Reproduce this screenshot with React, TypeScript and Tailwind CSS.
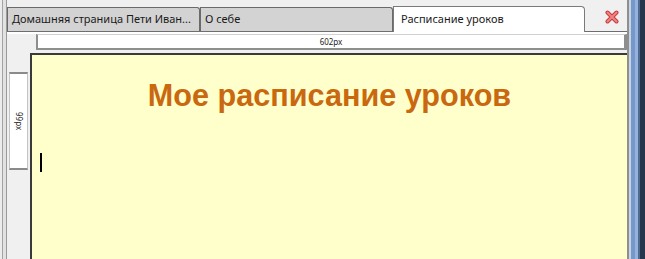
import { Fragment } from 'react';

const tabs = [
  { label: 'Домашняя страница Пети Иван...', active: false },
  { label: 'О себе', active: false },
  { label: 'Расписание уроков', active: true },
];

const CloseIcon = () => (
  <svg width="14" height="14" viewBox="0 0 14 14">
    <path d="M2.5 2.5 L11.5 11.5 M11.5 2.5 L2.5 11.5" stroke="#c83a3a" strokeWidth="4" strokeLinecap="round" />
    <path d="M2.5 2.5 L11.5 11.5 M11.5 2.5 L2.5 11.5" stroke="#ee8484" strokeWidth="2" strokeLinecap="round" />
  </svg>
);

export default function App() {
  return (
    <div className="w-[645px] h-[259px] flex overflow-hidden bg-[#f0f0f0] font-['Noto_Sans','Liberation_Sans',sans-serif]">
      {/* left window edge */}
      <div className="flex w-[7px] shrink-0">
        <div className="w-[2px] bg-[#ececec]" />
        <div className="w-px bg-[#a4a4a4]" />
        <div className="w-[3px] bg-[#e2e2e2]" />
        <div className="w-px bg-[#9a9a9a]" />
      </div>

      <div className="flex flex-col w-[620px] shrink-0">
        {/* tabs */}
        <div className="flex h-[32px] items-end border-b border-[#6e6e6e]">
          {tabs.map((t) => (
            <Fragment key={t.label}>
              {t.active ? (
                <div className="w-[192px] h-[26px] -mb-px bg-white border border-b-0 border-[#7a7a7a] rounded-tr-[4px] px-[7px] flex items-center text-[11px] text-[#1a1a1a]">
                  {t.label}
                </div>
              ) : (
                <div className="w-[193px] h-[24px] bg-[#d3d3d3] border border-b-0 border-[#6a6a6a] rounded-tr-[3px] px-[4px] flex items-center text-[11px] text-[#1a1a1a] whitespace-nowrap overflow-hidden">
                  {t.label}
                </div>
              )}
            </Fragment>
          ))}
          <div className="flex-1 h-full flex items-center justify-end pr-[8px] pt-[2px]">
            <CloseIcon />
          </div>
        </div>
        <div className="h-[2px] bg-white" />

        {/* horizontal ruler */}
        <div className="flex h-[16px]">
          <div className="w-[29px]" />
          <div className="flex-1 bg-white border-l-2 border-r-[3px] border-b-2 border-t border-[#8e8e8e] border-t-[#d0d0d0] flex items-center justify-center text-[8px] leading-none text-[#222]">
            602px
          </div>
        </div>
        <div className="h-[3px]" />

        {/* page area */}
        <div className="flex flex-1">
          <div className="w-[23px] pt-[19px] pl-[2px]">
            <div className="w-[19px] h-[98px] bg-white border-y-2 border-x border-[#8a8a8a] border-x-[#c4c4c4] flex items-center justify-center">
              <span className="[writing-mode:vertical-rl] text-[8px] leading-none text-[#222]">99px</span>
            </div>
          </div>
          <div className="flex-1 bg-[#ffffcc] border-l-2 border-t-2 border-[#3a3a3a] flex flex-col">
            <h1 className="pt-[22px] text-center text-[30.6px] leading-[36px] font-bold text-[#c9680f] font-['Liberation_Sans',Arial,sans-serif]">
              Мое расписание уроков
            </h1>
            <div className="ml-[8px] mt-[40px] w-[2px] h-[19px] bg-black" />
          </div>
        </div>
      </div>

      {/* right window edge */}
      <div className="flex w-[18px] shrink-0">
        <div className="w-[2px] bg-[#8f8f8f]" />
        <div className="w-[2px] bg-[#c9d3e2]" />
        <div className="w-[4px] bg-[#7498cb]" />
        <div className="w-[3px] bg-[#96b2da]" />
        <div className="w-[2px] bg-[#4d6a93]" />
        <div className="flex-1 bg-[#26344c]" />
      </div>
    </div>
  );
}
